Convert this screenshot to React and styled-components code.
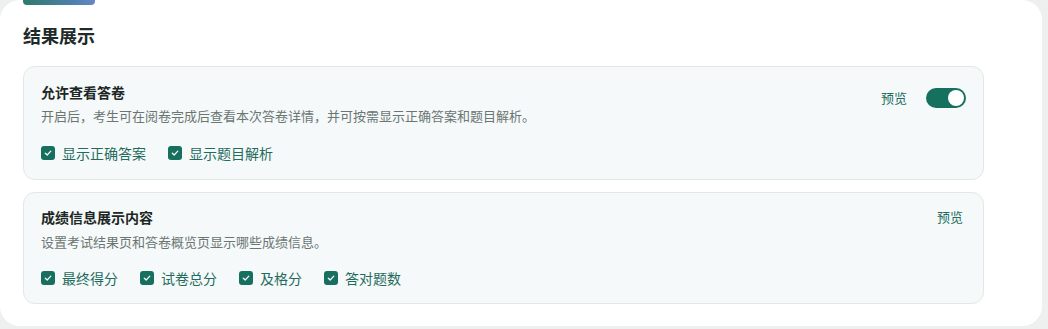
import React, { useState } from "react";
import styled, { createGlobalStyle } from "styled-components";

const Global = createGlobalStyle`
  html, body { margin: 0; padding: 0; background: #eef0f0; }
  body { font-family: "Noto Sans CJK SC", "Noto Sans", sans-serif; }
`;

const Card = styled.div`
  width: 1042px;
  height: 326px;
  box-sizing: border-box;
  background: #ffffff;
  border-radius: 20px;
  padding: 0 58px 22px 23px;
  display: flex;
  flex-direction: column;
`;

const Accent = styled.div`
  width: 72px;
  height: 5px;
  border-radius: 0 0 4px 4px;
  background: linear-gradient(90deg, #2f7a6b 0%, #4f7fae 70%, #6687c6 100%);
`;

const Heading = styled.h2`
  margin: 17px 0 0;
  font-size: 18px;
  line-height: 26px;
  font-weight: 700;
  color: #1e2b28;
`;

const Stack = styled.div`
  margin-top: 18px;
  display: flex;
  flex-direction: column;
  gap: 12px;
`;

const Panel = styled.section`
  box-sizing: border-box;
  height: ${(p) => p.$h}px;
  border: 1px solid #e1e8e6;
  border-radius: 12px;
  background: #f5f9f9;
  padding: ${(p) => p.$pt}px 17px 0 17px;
  display: flex;
  flex-direction: column;
`;

const Head = styled.div`
  display: flex;
  justify-content: space-between;
  align-items: flex-start;
`;

const Texts = styled.div`
  display: flex;
  flex-direction: column;
`;

const Title = styled.div`
  font-size: 14px;
  line-height: 20px;
  font-weight: 700;
  color: #1d2725;
`;

const Desc = styled.div`
  margin-top: ${(p) => p.$mt}px;
  font-size: 13px;
  line-height: 20px;
  color: #6b7673;
`;

const Actions = styled.div`
  display: flex;
  align-items: center;
  gap: 19px;
  margin-top: ${(p) => p.$mt}px;
  margin-right: ${(p) => p.$mr || 0}px;
`;

const PreviewLink = styled.span`
  font-size: 13px;
  line-height: 20px;
  color: #1b6e5e;
  cursor: pointer;
`;

const Switch = styled.button`
  position: relative;
  width: 40px;
  height: 20px;
  border: none;
  padding: 0;
  border-radius: 10px;
  background: ${(p) => (p.$on ? "#16705e" : "#c9d1cf")};
  cursor: pointer;
  &::after {
    content: "";
    position: absolute;
    top: 2px;
    left: ${(p) => (p.$on ? "22px" : "2px")};
    width: 16px;
    height: 16px;
    border-radius: 50%;
    background: #ffffff;
  }
`;

const Checks = styled.div`
  margin-top: ${(p) => p.$mt}px;
  display: flex;
  align-items: center;
  gap: 22px;
`;

const CheckItem = styled.label`
  display: flex;
  align-items: center;
  gap: 7px;
  font-size: 14px;
  line-height: 20px;
  color: #1f6b5d;
  cursor: pointer;
`;

const Box = styled.span`
  width: 14px;
  height: 14px;
  border-radius: 3px;
  background: #17705f;
  display: inline-flex;
  align-items: center;
  justify-content: center;
`;

function Check({ label }) {
  return (
    <CheckItem>
      <Box>
        <svg width="10" height="10" viewBox="0 0 10 10">
          <path d="M2.3 5.2 L4.2 7 L7.8 3.2" fill="none" stroke="#fff" strokeWidth="1.2" strokeLinecap="round" strokeLinejoin="round" />
        </svg>
      </Box>
      {label}
    </CheckItem>
  );
}

export default function App() {
  const [on, setOn] = useState(true);
  return (
    <>
      <Global />
      <Card>
        <Accent />
        <Heading>结果展示</Heading>
        <Stack>
          <Panel $h={114} $pt={15}>
            <Head>
              <Texts>
                <Title>允许查看答卷</Title>
                <Desc $mt={4}>开启后，考生可在阅卷完成后查看本次答卷详情，并可按需显示正确答案和题目解析。</Desc>
              </Texts>
              <Actions $mt={6}>
                <PreviewLink>预览</PreviewLink>
                <Switch $on={on} onClick={() => setOn(!on)} aria-label="toggle" />
              </Actions>
            </Head>
            <Checks $mt={17}>
              <Check label="显示正确答案" />
              <Check label="显示题目解析" />
            </Checks>
          </Panel>
          <Panel $h={112} $pt={14}>
            <Head>
              <Texts>
                <Title>成绩信息展示内容</Title>
                <Desc $mt={5}>设置考试结果页和答卷概览页显示哪些成绩信息。</Desc>
              </Texts>
              <Actions $mt={0} $mr={3}>
                <PreviewLink>预览</PreviewLink>
              </Actions>
            </Head>
            <Checks $mt={16}>
              <Check label="最终得分" />
              <Check label="试卷总分" />
              <Check label="及格分" />
              <Check label="答对题数" />
            </Checks>
          </Panel>
        </Stack>
      </Card>
    </>
  );
}
